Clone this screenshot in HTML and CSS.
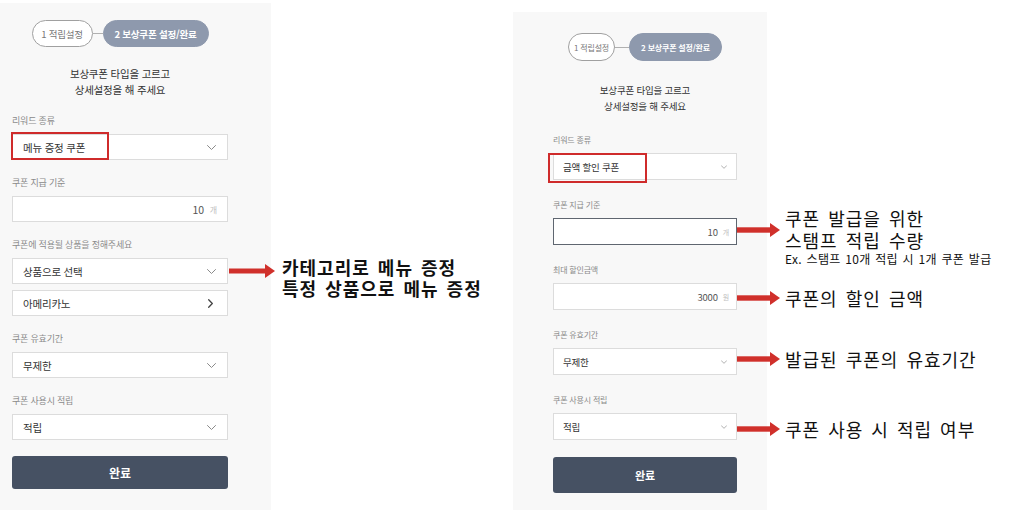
FILE: index.html
```html
<!DOCTYPE html>
<html lang="ko">
<head>
<meta charset="utf-8">
<title>보상쿠폰 설정</title>
<link rel="stylesheet" href="styles.css">
</head>
<body>
<div class="canvas">
  <section class="panel panel-l">
    <div class="stepper">
      <span class="step step-1">1 적립설정</span><span class="step-line"></span><span class="step step-2 step-on">2 보상쿠폰 설정/완료</span>
    </div>
    <p class="intro">보상쿠폰 타입을 고르고<br>상세설정을 해 주세요</p>
    <div class="field">
      <div class="label">리워드 종류</div>
      <div class="box">
        <span>메뉴 증정 쿠폰</span>
        <svg class="chev" viewBox="0 0 9 5"><path d="M0.5 0.5L4.5 4.5L8.5 0.5"/></svg>
        <span class="hl"></span>
      </div>
    </div>
    <div class="field">
      <div class="label">쿠폰 지급 기준</div>
      <div class="box box-num"><span class="num">10</span><span class="unit">개</span></div>
    </div>
    <div class="field">
      <div class="label">쿠폰에 적용될 상품을 정해주세요</div>
      <div class="box">
        <span>상품으로 선택</span>
        <svg class="chev" viewBox="0 0 9 5"><path d="M0.5 0.5L4.5 4.5L8.5 0.5"/></svg>
      </div>
      <div class="box box-next">
        <span>아메리카노</span>
        <svg class="gt" viewBox="0 0 5 9"><path d="M0.7 0.7L4.3 4.5L0.7 8.3"/></svg>
      </div>
    </div>
    <div class="field">
      <div class="label">쿠폰 유효기간</div>
      <div class="box">
        <span>무제한</span>
        <svg class="chev" viewBox="0 0 9 5"><path d="M0.5 0.5L4.5 4.5L8.5 0.5"/></svg>
      </div>
    </div>
    <div class="field">
      <div class="label">쿠폰 사용시 적립</div>
      <div class="box">
        <span>적립</span>
        <svg class="chev" viewBox="0 0 9 5"><path d="M0.5 0.5L4.5 4.5L8.5 0.5"/></svg>
      </div>
    </div>
    <button class="done">완료</button>
  </section>

  <section class="panel panel-r">
    <div class="stepper">
      <span class="step step-1">1 적립설정</span><span class="step-line"></span><span class="step step-2 step-on">2 보상쿠폰 설정/완료</span>
    </div>
    <p class="intro">보상쿠폰 타입을 고르고<br>상세설정을 해 주세요</p>
    <div class="field">
      <div class="label">리워드 종류</div>
      <div class="box">
        <span>금액 할인 쿠폰</span>
        <svg class="chev" viewBox="0 0 9 5"><path d="M0.5 0.5L4.5 4.5L8.5 0.5"/></svg>
        <span class="hl"></span>
      </div>
    </div>
    <div class="field">
      <div class="label">쿠폰 지급 기준</div>
      <div class="box box-num box-focus"><span class="num">10</span><span class="unit">개</span></div>
    </div>
    <div class="field">
      <div class="label">최대 할인금액</div>
      <div class="box box-num"><span class="num">3000</span><span class="unit">원</span></div>
    </div>
    <div class="field">
      <div class="label">쿠폰 유효기간</div>
      <div class="box">
        <span>무제한</span>
        <svg class="chev" viewBox="0 0 9 5"><path d="M0.5 0.5L4.5 4.5L8.5 0.5"/></svg>
      </div>
    </div>
    <div class="field">
      <div class="label">쿠폰 사용시 적립</div>
      <div class="box">
        <span>적립</span>
        <svg class="chev" viewBox="0 0 9 5"><path d="M0.5 0.5L4.5 4.5L8.5 0.5"/></svg>
      </div>
    </div>
    <button class="done">완료</button>
  </section>

  <svg class="arrow arrow-l" viewBox="0 0 46 14"><rect x="0" y="4.5" width="37" height="5"/><polygon points="36,0 46,7 36,14"/></svg>
  <p class="note note-l">카테고리로 메뉴 증정<br>특정 상품으로 메뉴 증정</p>

  <svg class="arrow arrow-r arrow-r1" viewBox="0 0 43 14"><rect x="0" y="4.3" width="34" height="5.4"/><polygon points="33,0 43,7 33,14"/></svg>
  <div class="note note-r note-r1">쿠폰 발급을 위한<br>스탬프 적립 수량<p class="note-sub">Ex. 스탬프 10개 적립 시 1개 쿠폰 발급</p></div>

  <svg class="arrow arrow-r arrow-r2" viewBox="0 0 43 14"><rect x="0" y="4.3" width="34" height="5.4"/><polygon points="33,0 43,7 33,14"/></svg>
  <p class="note note-r note-r2">쿠폰의 할인 금액</p>

  <svg class="arrow arrow-r arrow-r3" viewBox="0 0 43 14"><rect x="0" y="4.3" width="34" height="5.4"/><polygon points="33,0 43,7 33,14"/></svg>
  <p class="note note-r note-r3">발급된 쿠폰의 유효기간</p>

  <svg class="arrow arrow-r arrow-r4" viewBox="0 0 43 14"><rect x="0" y="4.3" width="34" height="5.4"/><polygon points="33,0 43,7 33,14"/></svg>
  <p class="note note-r note-r4">쿠폰 사용 시 적립 여부</p>
</div>
</body>
</html>
```

FILE: styles.css
```css
* { box-sizing: border-box; margin: 0; padding: 0; }

body {
  margin: 0;
  background: #ffffff;
  font-family: "Noto Sans CJK KR", "Noto Sans", sans-serif;
  color: #333333;
}

.canvas {
  position: relative;
  width: 1028px;
  height: 513px;
  display: flex;
  align-items: flex-start;
  overflow: hidden;
}

.panel {
  background: #f8f8f8;
  display: flex;
  flex-direction: column;
}

.panel-l {
  width: 271px;
  height: 507px;
  margin-top: 3px;
  padding: 17px 43px 0 12px;
}

.panel-r {
  width: 254px;
  height: 498px;
  margin-top: 12px;
  margin-left: 242px;
  padding: 21px 30px 0 40px;
}

/* stepper */
.stepper {
  display: flex;
  align-items: center;
  justify-content: center;
}

.step {
  display: flex;
  align-items: center;
  justify-content: center;
  border: 1px solid #a0a0a0;
  border-radius: 999px;
  color: #777777;
  background: #ffffff;
  white-space: nowrap;
  letter-spacing: -0.2px;
}

.step-on {
  background: #8e99ad;
  border-color: #8e99ad;
  color: #ffffff;
  font-weight: 700;
}

.step-line {
  height: 1px;
  background: #b0b0b0;
}

.panel-l .step { height: 27px; font-size: 9.5px; }
.panel-l .step-1 { width: 61px; }
.panel-l .step-2 { width: 106px; }
.panel-l .step-line { width: 10px; }

.panel-r .step { height: 28px; font-size: 8px; }
.panel-r .step-1 { width: 47px; }
.panel-r .step-2 { width: 93px; }
.panel-r .step-line { width: 14px; }

/* intro */
.intro {
  text-align: center;
  line-height: 16px;
  color: #333333;
  letter-spacing: -0.2px;
}

.panel-l .intro { margin-top: 19px; font-size: 10.5px; }
.panel-r .intro { margin-top: 21px; margin-bottom: 1px; font-size: 9.5px; }

/* fields */
.label {
  height: 14px;
  line-height: 14px;
  color: #8a8a8a;
  white-space: nowrap;
  letter-spacing: -0.2px;
}

.box {
  position: relative;
  display: flex;
  align-items: center;
  justify-content: space-between;
  background: #ffffff;
  border: 1px solid #dcdcdc;
  color: #333333;
  letter-spacing: -0.2px;
}

.box-num { justify-content: flex-end; }

.box-focus { border-color: #5f6670; }

.num { color: #555555; }
.unit { color: #c0c0c0; }

.chev, .gt {
  fill: none;
  stroke-linecap: round;
  stroke-linejoin: round;
}

.chev { stroke: #8a8a8a; stroke-width: 1; }
.gt { stroke: #444444; stroke-width: 1.3; }

.hl {
  position: absolute;
  border: 2px solid #cf2b2b;
}

.panel-l .field { margin-top: 16px; }
.panel-l .label { font-size: 9px; margin-bottom: 6px; }
.panel-l .box { height: 26px; padding: 0 10px 0 10px; font-size: 10.5px; }
.panel-l .box-next { margin-top: 6px; }
.panel-l .chev { width: 9px; height: 5px; margin-right: 1px; }
.panel-l .gt { width: 5px; height: 9px; margin-right: 4px; }
.panel-l .unit { font-size: 8px; margin-left: 6px; }
.panel-l .hl { left: -2px; top: -3px; width: 98px; height: 28px; }

.panel-r .field { margin-top: 18px; }
.panel-r .label { font-size: 8px; margin-bottom: 6px; }
.panel-r .box { height: 27px; padding: 0 7px 0 9px; font-size: 9.5px; }
.panel-r .chev { width: 6px; height: 4px; margin-right: 2px; }
.panel-r .unit { font-size: 7px; margin-left: 5px; }
.panel-r .hl { left: -6px; top: -1px; width: 99px; height: 30px; }

/* button */
.done {
  border: none;
  border-radius: 3px;
  background: #465163;
  color: #ffffff;
  font-family: inherit;
  font-weight: 700;
}

.panel-l .done { margin-top: 16px; height: 33px; font-size: 12px; }
.panel-r .done { margin-top: 17px; height: 36px; font-size: 11px; }

/* callouts */
.arrow {
  position: absolute;
  fill: #d0302b;
}

.arrow-l { left: 229px; top: 264px; width: 46px; height: 14px; }
.arrow-r { left: 737px; width: 43px; height: 14px; }
.arrow-r1 { top: 223px; }
.arrow-r2 { top: 291px; }
.arrow-r3 { top: 352px; }
.arrow-r4 { top: 422px; }

.note {
  position: absolute;
  color: #111111;
  font-size: 18px;
  white-space: nowrap;
  letter-spacing: 1px;
  word-spacing: 2px;
}

.note-l {
  left: 282px;
  top: 257px;
  line-height: 21px;
  font-weight: 700;
}

.note-r {
  left: 785px;
  line-height: 22px;
  font-weight: 400;
}

.note-r1 { top: 207px; }
.note-r2 { top: 287px; }
.note-r3 { top: 348px; }
.note-r4 { top: 418px; }

.note-sub {
  font-size: 12px;
  line-height: 16px;
  letter-spacing: 0.3px;
  word-spacing: 1px;
}
```
